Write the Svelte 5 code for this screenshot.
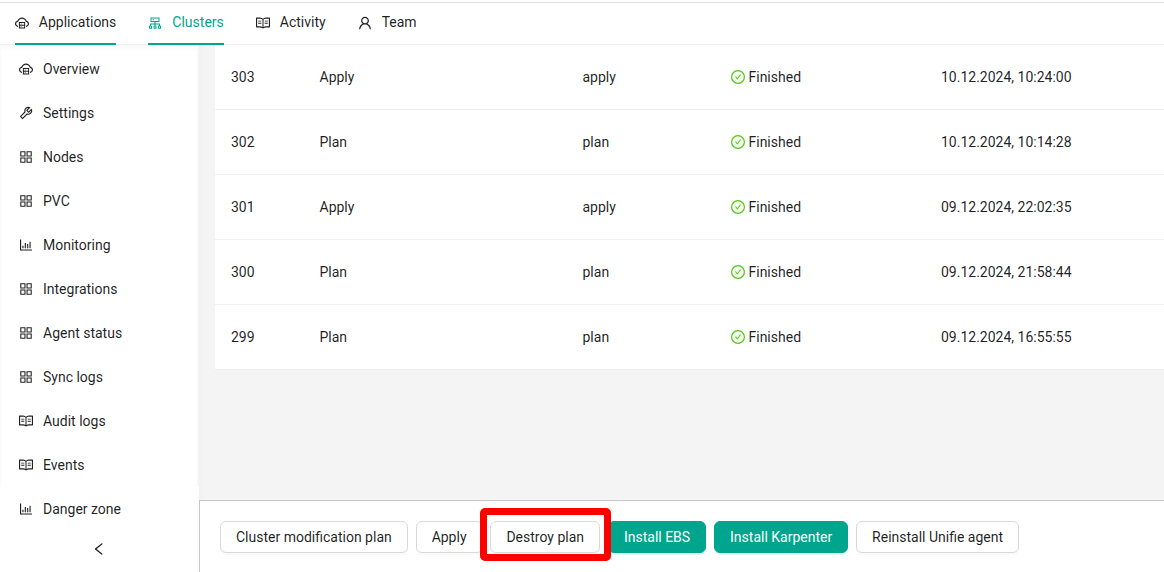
<script>
  const tabs = [
    { label: 'Applications', icon: 'cloud', bar: true },
    { label: 'Clusters', icon: 'cluster', bar: true, active: true },
    { label: 'Activity', icon: 'book' },
    { label: 'Team', icon: 'user' }
  ];
  const menu = [
    ['Overview', 'cloud'], ['Settings', 'tool'], ['Nodes', 'grid'], ['PVC', 'grid'],
    ['Monitoring', 'chart'], ['Integrations', 'grid'], ['Agent status', 'grid'],
    ['Sync logs', 'grid'], ['Audit logs', 'book'], ['Events', 'book'], ['Danger zone', 'chart']
  ];
  const rows = [
    [303, 'Apply', 'apply', '10.12.2024, 10:24:00'],
    [302, 'Plan', 'plan', '10.12.2024, 10:14:28'],
    [301, 'Apply', 'apply', '09.12.2024, 22:02:35'],
    [300, 'Plan', 'plan', '09.12.2024, 21:58:44'],
    [299, 'Plan', 'plan', '09.12.2024, 16:55:55']
  ];
</script>

{#snippet icon(name)}
  <svg class="icon" viewBox="64 64 896 896" width="14" height="14" fill="currentColor" aria-hidden="true">
    {#if name === 'cloud'}
      <path d="M704 446H320c-4.400 0-8 3.600-8 8v402c0 4.400 3.600 8 8 8h384c4.400 0 8-3.600 8-8V454c0-4.400-3.600-8-8-8zm-328 64h272v117H376V510zm272 290H376V683h272v117z"/>
      <path d="M424 748a32 32 0 1064 0 32 32 0 10-64 0zm0-178a32 32 0 1064 0 32 32 0 10-64 0z"/>
      <path d="M811.400 368.900C765.600 248 648.900 162 512.200 162S258.800 247.900 213 368.800C126.900 391.500 63.500 470.200 64 563.600 64.600 668 145.600 752.900 247.600 762c4.700.4 8.700-3.300 8.700-8v-60.400c0-4-3-7.400-7-7.900-27-3.400-52.500-15.200-72.100-34.500-24-23.500-37.200-55.100-37.200-88.600 0-28 9.100-54.400 26.200-76.400 16.700-21.400 40.200-36.900 66.100-43.700l37.900-10 13.900-36.700c8.600-22.800 20.600-44.200 35.700-63.500 14.900-19.200 32.600-36 52.400-50 41.100-28.900 89.500-44.200 140-44.200s98.900 15.300 140 44.300c19.900 14 37.500 30.800 52.400 50 15.100 19.300 27.100 40.700 35.700 63.500l13.800 36.600 37.800 10c54.200 14.400 92.100 63.700 92.100 120 0 33.600-13.200 65.100-37.200 88.600-19.500 19.200-44.900 31.100-71.900 34.500-4 .5-6.900 3.900-6.900 7.900V754c0 4.700 4.100 8.400 8.800 8 101.700-9.200 182.500-94 183.200-198.200.6-93.400-62.700-172.100-148.600-194.900z"/>
    {:else if name === 'cluster'}
      <path d="M888 680h-54V540H546v-92h238c8.800 0 16-7.200 16-16V168c0-8.800-7.200-16-16-16H240c-8.800 0-16 7.200-16 16v264c0 8.800 7.200 16 16 16h238v92H190v140h-54c-4.400 0-8 3.600-8 8v176c0 4.400 3.600 8 8 8h176c4.400 0 8-3.600 8-8V688c0-4.400-3.600-8-8-8h-54v-72h220v72h-54c-4.400 0-8 3.600-8 8v176c0 4.400 3.600 8 8 8h176c4.400 0 8-3.600 8-8V688c0-4.400-3.600-8-8-8h-54v-72h220v72h-54c-4.400 0-8 3.600-8 8v176c0 4.400 3.600 8 8 8h176c4.400 0 8-3.600 8-8V688c0-4.400-3.600-8-8-8zM256 805.300c0 1.500-1.200 2.700-2.700 2.700h-58.700c-1.500 0-2.700-1.200-2.700-2.700v-58.700c0-1.500 1.200-2.700 2.700-2.700h58.700c1.500 0 2.700 1.200 2.700 2.700v58.700zm288 0c0 1.500-1.200 2.700-2.700 2.700h-58.700c-1.500 0-2.700-1.200-2.700-2.700v-58.700c0-1.500 1.200-2.700 2.700-2.700h58.700c1.500 0 2.700 1.200 2.700 2.700v58.700zM288 384V216h448v168H288zm544 421.300c0 1.500-1.200 2.700-2.700 2.700h-58.700c-1.500 0-2.700-1.200-2.700-2.700v-58.700c0-1.500 1.200-2.700 2.700-2.700h58.700c1.500 0 2.700 1.200 2.700 2.700v58.700zM360 300a40 40 0 1080 0 40 40 0 10-80 0z"/>
    {:else if name === 'book'}
      <path d="M928 161H699.200c-49.100 0-97.100 14.100-138.400 40.700L512 233l-48.800-31.300A255.200 255.200 0 00324.800 161H96c-17.700 0-32 14.300-32 32v568c0 17.700 14.300 32 32 32h228.800c49.100 0 97.100 14.100 138.400 40.700l44.400 28.600c1.300.8 2.800 1.300 4.300 1.300s3-.4 4.300-1.300l44.400-28.600C602 807.100 650.100 793 699.200 793H928c17.700 0 32-14.300 32-32V193c0-17.700-14.300-32-32-32zM324.800 721H136V233h188.800c35.400 0 69.800 10.100 99.500 29.200l48.800 31.300 6.900 4.500v462c-47.600-25.600-100.800-39-155.200-39zm563.200 0H699.200c-54.400 0-107.600 13.400-155.200 39V298l6.900-4.500 48.800-31.300c29.700-19.100 64.100-29.200 99.500-29.200H888v488zM396.900 361H211.100c-3.900 0-7.100 3.400-7.100 7.500v45c0 4.100 3.200 7.500 7.100 7.500h185.700c3.900 0 7.100-3.400 7.100-7.500v-45c.1-4.100-3.100-7.500-7-7.500zm223.100 7.500v45c0 4.100 3.200 7.500 7.100 7.500h185.700c3.900 0 7.100-3.400 7.100-7.500v-45c0-4.100-3.200-7.500-7.100-7.500H627.100c-3.900 0-7.100 3.400-7.100 7.500zM396.900 501H211.100c-3.900 0-7.100 3.400-7.100 7.500v45c0 4.100 3.200 7.500 7.100 7.500h185.700c3.900 0 7.100-3.400 7.100-7.500v-45c.1-4.100-3.100-7.500-7-7.500zm416 0H627.100c-3.900 0-7.100 3.400-7.100 7.500v45c0 4.100 3.200 7.500 7.100 7.500h185.700c3.900 0 7.100-3.400 7.100-7.500v-45c.1-4.100-3.100-7.500-7-7.500z"/>
    {:else if name === 'user'}
      <path d="M858.500 763.600a374 374 0 00-80.600-119.500 375.630 375.630 0 00-119.500-80.600c-.4-.2-.8-.3-1.200-.5C719.500 518 760 444.700 760 362c0-137-111-248-248-248S264 225 264 362c0 82.700 40.500 156 102.800 201.100-.4.2-.8.3-1.200.5-44.800 18.900-85 46-119.500 80.600a375.630 375.630 0 00-80.600 119.500A371.700 371.700 0 00136 901.800a8 8 0 008 8.200h60c4.400 0 7.900-3.500 8-7.800 2-77.200 33-149.500 87.800-204.300 56.700-56.700 132-87.900 212.200-87.900s155.500 31.200 212.200 87.900C779 752.700 810 825 812 902.200c.1 4.400 3.600 7.800 8 7.800h60a8 8 0 008-8.200c-1-47.800-10.900-94.300-29.500-138.200zM512 534c-45.900 0-89.100-17.900-121.600-50.400S340 407.900 340 362c0-45.900 17.900-89.100 50.400-121.600S466.100 190 512 190s89.100 17.900 121.600 50.400S684 316.100 684 362c0 45.900-17.900 89.100-50.400 121.600S557.900 534 512 534z"/>
    {:else if name === 'tool'}
      <path d="M876.600 239.500c-.5-.9-1.200-1.800-2-2.500-5-5-13.100-5-18.100 0L684.200 409.300l-67.900-67.900L788.700 169c.8-.8 1.400-1.600 2-2.500 3.600-6.100 1.600-13.900-4.500-17.500-98.200-58-226.800-44.700-311.300 39.700-67 67-89.200 162-66.500 247.400l-293 293c-3 3-2.800 7.900.3 11l169.700 169.700c3.100 3.100 8.100 3.300 11 .3l292.900-292.900c85.500 22.800 180.500.7 247.600-66.400 84.400-84.500 97.700-213.100 39.700-311.300zM786 499.800c-58.100 58.100-145.300 69.300-214.600 33.600l-8.800 8.800-.1-.1-274 274.100-79.200-79.200 230.100-230.100s0 .1.100.1l52.800-52.800c-35.700-69.300-24.500-156.500 33.600-214.600a184.200 184.200 0 01144-53.500L537 318.900a32.050 32.050 0 000 45.300l124.500 124.500a32.050 32.050 0 0045.300 0l132.800-132.800c3.700 51.800-14.400 104.800-53.600 143.900z"/>
    {:else if name === 'grid'}
      <path d="M464 144H160c-8.800 0-16 7.200-16 16v304c0 8.800 7.200 16 16 16h304c8.800 0 16-7.200 16-16V160c0-8.800-7.200-16-16-16zm-52 268H212V212h200v200zm452-268H560c-8.800 0-16 7.200-16 16v304c0 8.800 7.200 16 16 16h304c8.800 0 16-7.200 16-16V160c0-8.800-7.200-16-16-16zm-52 268H612V212h200v200zM464 544H160c-8.800 0-16 7.200-16 16v304c0 8.800 7.200 16 16 16h304c8.800 0 16-7.200 16-16V560c0-8.800-7.200-16-16-16zm-52 268H212V612h200v200zm452-268H560c-8.800 0-16 7.200-16 16v304c0 8.800 7.200 16 16 16h304c8.800 0 16-7.200 16-16V560c0-8.800-7.200-16-16-16zm-52 268H612V612h200v200z"/>
    {:else if name === 'chart'}
      <path d="M888 792H200V168c0-4.400-3.600-8-8-8h-56c-4.400 0-8 3.600-8 8v688c0 4.400 3.600 8 8 8h752c4.400 0 8-3.600 8-8v-56c0-4.400-3.600-8-8-8zm-600-80h56c4.400 0 8-3.600 8-8V560c0-4.400-3.600-8-8-8h-56c-4.400 0-8 3.600-8 8v144c0 4.400 3.600 8 8 8zm152 0h56c4.400 0 8-3.600 8-8V384c0-4.400-3.600-8-8-8h-56c-4.400 0-8 3.600-8 8v320c0 4.400 3.600 8 8 8zm152 0h56c4.400 0 8-3.600 8-8V462c0-4.400-3.600-8-8-8h-56c-4.400 0-8 3.600-8 8v242c0 4.400 3.600 8 8 8zm152 0h56c4.400 0 8-3.600 8-8V304c0-4.400-3.600-8-8-8h-56c-4.400 0-8 3.600-8 8v400c0 4.400 3.600 8 8 8z"/>
    {:else if name === 'left'}
      <path d="M724 218.300V141c0-6.700-7.700-10.400-12.900-6.300L260.300 486.800a31.860 31.860 0 000 50.300l450.800 352.100c5.300 4.100 12.900.4 12.900-6.300v-77.300c0-4.900-2.300-9.600-6.100-12.600l-360-281 360-281.100c3.800-3 6.100-7.700 6.100-12.600z"/>
    {:else if name === 'check'}
      <circle cx="512" cy="512" r="410" fill="#f6ffed" stroke="#52c41a" stroke-width="76"/>
      <path fill="#52c41a" d="M699 353h-46.900c-10.200 0-19.900 4.900-25.900 13.300L469 584.300l-71.200-98.800c-6-8.300-15.600-13.300-25.900-13.300H325c-6.500 0-10.300 7.400-6.500 12.700l124.600 172.800a31.800 31.800 0 0051.700 0l210.600-292c3.900-5.300.1-12.700-6.400-12.700z"/>
    {/if}
  </svg>
{/snippet}

<div class="page">
  <header>
    {#each tabs as tab}
      <div class="tab" class:bar={tab.bar} class:active={tab.active}>
        {@render icon(tab.icon)}<span>{tab.label}</span>
      </div>
    {/each}
  </header>
  <div class="body">
    <aside>
      <nav>
        {#each menu as [label, glyph]}
          <div class="item">{@render icon(glyph)}<span>{label}</span></div>
        {/each}
      </nav>
      <div class="collapse">{@render icon('left')}</div>
    </aside>
    <main>
      <section>
        <div class="table">
          {#each rows as [id, name, kind, date]}
            <div class="row">
              <span>{id}</span><span>{name}</span><span>{kind}</span>
              <span class="status">{@render icon('check')}Finished</span><span>{date}</span>
            </div>
          {/each}
        </div>
      </section>
      <footer>
        <button>Cluster modification plan</button>
        <button>Apply</button>
        <div class="marked"><button>Destroy plan</button><i></i></div>
        <button class="primary">Install EBS</button>
        <button class="primary">Install Karpenter</button>
        <button>Reinstall Unifie agent</button>
      </footer>
    </main>
  </div>
</div>

<style>
  :global(body) { margin: 0; overflow: hidden; }
  .page {
    display: flex;
    flex-direction: column;
    height: 572px;
    box-sizing: border-box;
    padding-top: 2px;
    background: #fff;
    color: rgba(0, 0, 0, 0.88);
    font: 14px/22px Roboto, sans-serif;
  }
  .icon { display: block; flex: none; }
  header {
    display: flex;
    gap: 32px;
    height: 43px;
    box-sizing: border-box;
    padding-left: 14.8px;
    border-top: 1px solid #e2e2e2;
    box-shadow: inset 0 -1px #f0f0f0;
  }
  .tab {
    display: flex;
    align-items: center;
    gap: 10px;
    box-sizing: border-box;
    height: 42px;
    border-bottom: 2px solid transparent;
  }
  .tab span { position: relative; top: -1px; }
  .bar { border-bottom-color: #00a58e; }
  .active { color: #00a58e; }
  .body { display: flex; flex: 1; min-height: 0; }
  aside {
    width: 199px;
    flex: none;
    display: flex;
    flex-direction: column;
    background: #fff;
  }
  nav {
    height: 441px;
    box-sizing: border-box;
    padding-top: 2px;
    background:
      linear-gradient(#f9f9f9, rgba(255, 255, 255, 0) 6px),
      linear-gradient(90deg, #fafafa, #fff 2px, #fff 196px, #f4f4f4 199px);
  }
  .item {
    display: flex;
    align-items: center;
    gap: 10px;
    height: 44px;
    padding-left: 19px;
  }
  .item:last-child { background: #fff; }
  .collapse { display: flex; padding: 56px 0 0 92px; }
  main { flex: 1; min-width: 0; display: flex; flex-direction: column; }
  section {
    flex: 1;
    min-height: 0;
    padding-left: 16px;
    background: linear-gradient(90deg, #f1f1f1, #f4f4f4 5px);
  }
  .table { background: #fff; }
  .row {
    display: grid;
    grid-template-columns: 88.500px 263px 148px 210.500px 1fr;
    align-items: center;
    height: 65px;
    box-sizing: border-box;
    padding-left: 16px;
    border-bottom: 1px solid #f0f0f0;
  }
  .status { display: flex; align-items: center; gap: 4px; }
  footer {
    display: flex;
    align-items: flex-start;
    gap: 7.900px;
    height: 72px;
    box-sizing: border-box;
    padding: 20px 0 0 20px;
    border-top: 1px solid #c8c8c8;
    border-left: 1px solid #c8c8c8;
  }
  button {
    display: block;
    height: 32px;
    box-sizing: border-box;
    padding: 0 15px;
    border: 1px solid #d9d9d9;
    border-radius: 6px;
    background: #fff;
    color: inherit;
    font: inherit;
    white-space: nowrap;
    box-shadow: 0 2px 0 rgba(0, 0, 0, 0.02);
  }
  .primary {
    background: #00a58e;
    border-color: #00a58e;
    color: #fff;
    box-shadow: 0 2px 0 rgba(5, 165, 142, 0.12);
  }
  .marked { position: relative; }
  .marked i {
    position: absolute;
    z-index: 1;
    inset: -13.500px -10.500px -8px -10px;
    border: 7px solid #f00;
    border-radius: 5px;
  }
</style>
